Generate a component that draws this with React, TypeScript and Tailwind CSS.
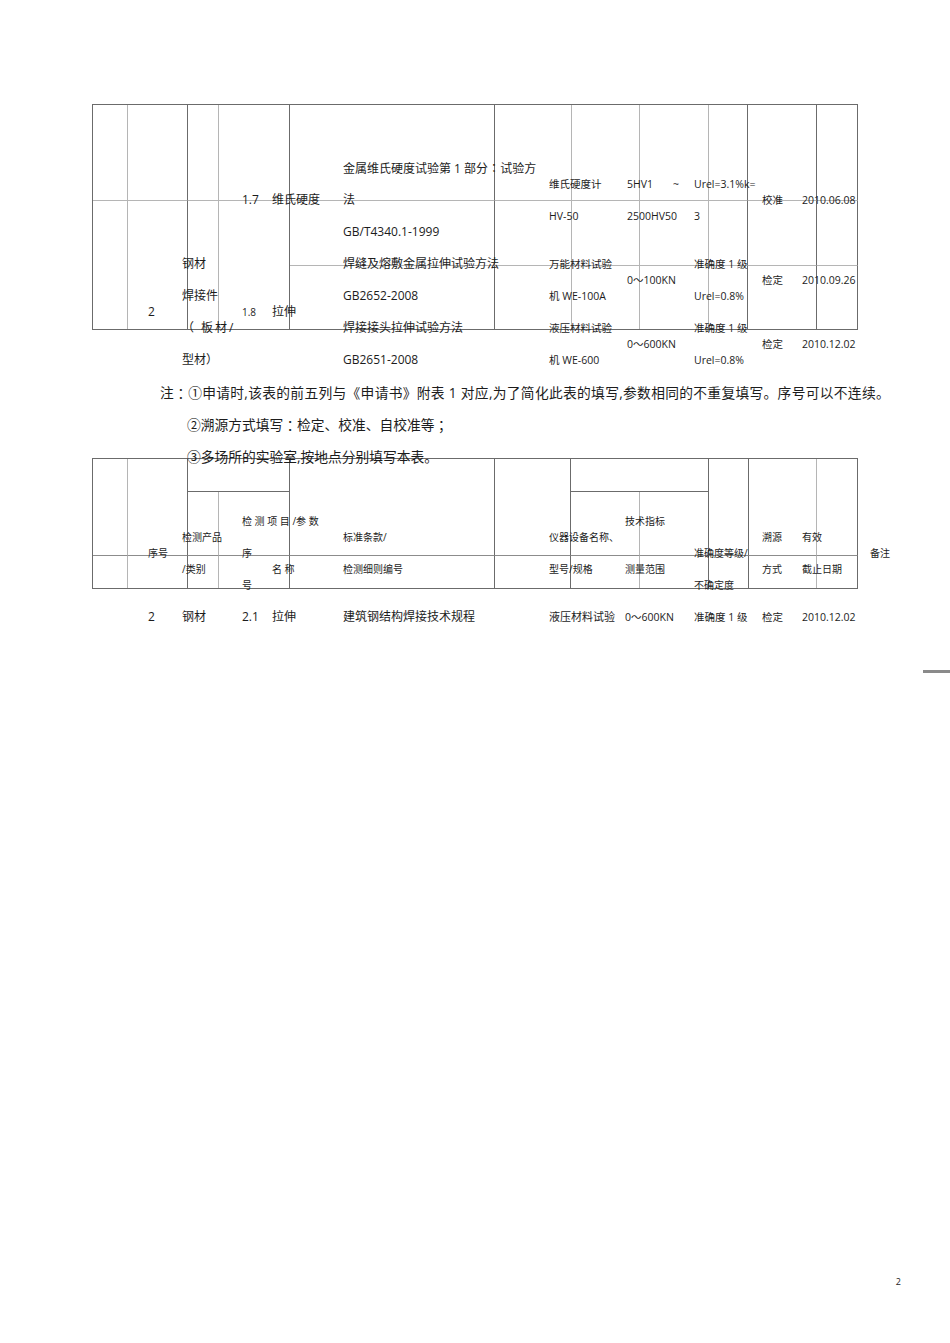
import type { ReactNode } from "react";
import clsx from "clsx";

// column starts (x): 148 182 242 272 343 549 627 694 762 802 870
const COL = [
	"col-start-2",
	"col-start-3",
	"col-start-4",
	"col-start-5",
	"col-start-6",
	"col-start-7",
	"col-start-8",
	"col-start-9",
	"col-start-10",
	"col-start-11",
	"col-start-12",
];

const S = "text-[10.5px]";
const H = "text-[10px]";

type Cell = [number, ReactNode, string?];

// centred full-width punctuation
function P({ c }: { c: string }) {
	return <span className="font-['Noto_Sans_CJK_JP',sans-serif]">{c}</span>;
}

function Line({ cells = [] }: { cells?: Cell[] }) {
	return (
		<div className="grid h-4 grid-cols-[148px_34px_60px_30px_71px_206px_78px_67px_68px_40px_68px_1fr] items-center">
			{cells.map(([col, text, cls], i) => (
				<span
					key={i}
					className={clsx(
						"row-start-1 whitespace-nowrap leading-4",
						COL[col],
						cls ?? "text-[12px]",
					)}
				>
					{text}
				</span>
			))}
		</div>
	);
}

// border colours
const RD = "border-r border-r-[#6b6b6b]";
const RL = "border-r border-r-[#b5b5b5]";
const BL = "border-b border-b-[#b5b5b5]";
const BD = "border-b border-b-[#6b6b6b]";
const BM = "border-b border-b-[#8c8c8c]";

function TableOne({ className }: { className?: string }) {
	const right = [RL, RD, RL, RD, RD, RL, RL, RL, RD, RD, RD];
	return (
		<div
			className={clsx(
				"grid w-max grid-cols-[35px_60px_31px_71px_205px_77px_68px_69px_39px_69px_41px] grid-rows-[96px_65px_63px] border-t border-b border-l border-[#6b6b6b]",
				className,
			)}
		>
			{right.map((r, i) => (
				<div key={`a${i}`} className={clsx(r, BL)} />
			))}
			{right.slice(0, 4).map((r, i) => (
				<div key={`b${i}`} className={clsx("row-span-2", r)} />
			))}
			{right.slice(4).map((r, i) => (
				<div key={`c${i}`} className={clsx(r, BL)} />
			))}
			{right.slice(4).map((r, i) => (
				<div key={`d${i}`} className={r} />
			))}
		</div>
	);
}

function TableTwo({ className }: { className?: string }) {
	return (
		<div
			className={clsx(
				"grid w-max grid-cols-[35px_60px_31px_71px_205px_76px_69px_69px_40px_68px_41px] grid-rows-[33px_64px_32px] border-t border-b border-l border-[#6b6b6b]",
				className,
			)}
		>
			{/* top band */}
			<div className={clsx("row-span-2", RL, BM)} />
			<div className={clsx("row-span-2", RD, BM)} />
			<div className={clsx("col-span-2", RD, BD)} />
			<div className={clsx("row-span-2", RD, BM)} />
			<div className={clsx("row-span-2", RD, BM)} />
			<div className={clsx("col-span-2", RD, BD)} />
			<div className={clsx("row-span-2", RD, BM)} />
			<div className={clsx("row-span-2", RL, BM)} />
			<div className={clsx("row-span-2", RD, BM)} />
			{/* split sub-columns */}
			<div className={clsx(RL, BM)} />
			<div className={clsx(RD, BM)} />
			<div className={clsx(RL, BM)} />
			<div className={clsx(RD, BM)} />
			{/* lower row */}
			{[RL, RD, RL, RD, RD, RD, RL, RD, RD, RL, RD].map((r, i) => (
				<div key={i} className={r} />
			))}
		</div>
	);
}

export default function App() {
	return (
		<div className="min-h-[1343px] w-[950px] bg-white font-['Open_Sans','Noto_Sans_CJK_SC',sans-serif] text-[#1c1c1c]">
			<div className="grid">
				<TableOne className="col-start-1 row-start-1 ml-[92px] mt-[104px] self-start" />
				<TableTwo className="col-start-1 row-start-1 ml-[92px] mt-[458px] self-start" />

				<div className="col-start-1 row-start-1 flex flex-col pt-[160px]">
					{/* table one text */}
					<Line
						cells={[
							[
								4,
								<>
									金属维氏硬度试验第 1 部分
									<P c="：" />
									试验方
								</>,
							],
						]}
					/>
					<Line
						cells={[
							[5, "维氏硬度计", S],
							[
								6,
								<span className="flex w-[52px] justify-between">
									5HV1<span>~</span>
								</span>,
								S,
							],
							[7, "Urel=3.1%k=", S],
						]}
					/>
					<Line
						cells={[
							[2, "1.7"],
							[3, "维氏硬度"],
							[4, "法"],
							[8, "校准", S],
							[9, "2010.06.08", S],
						]}
					/>
					<Line
						cells={[
							[5, "HV-50", S],
							[6, "2500HV50", S],
							[7, "3", S],
						]}
					/>
					<Line cells={[[4, "GB/T4340.1-1999"]]} />
					<Line />
					<Line
						cells={[
							[1, "钢材"],
							[4, "焊缝及熔敷金属拉伸试验方法"],
							[5, "万能材料试验", S],
							[7, "准确度 1 级", S],
						]}
					/>
					<Line
						cells={[
							[6, "0～100KN", S],
							[8, "检定", S],
							[9, "2010.09.26", S],
						]}
					/>
					<Line
						cells={[
							[1, "焊接件"],
							[4, "GB2652-2008"],
							[5, "机 WE-100A", S],
							[7, "Urel=0.8%", S],
						]}
					/>
					<Line
						cells={[
							[0, "2"],
							[2, "1.8", "text-[10px]"],
							[3, "拉伸"],
						]}
					/>
					<Line
						cells={[
							[1, "（ 板材/", "text-[12px] tracking-[2px]"],
							[4, "焊接接头拉伸试验方法"],
							[5, "液压材料试验", S],
							[7, "准确度 1 级", S],
						]}
					/>
					<Line
						cells={[
							[6, "0～600KN", S],
							[8, "检定", S],
							[9, "2010.12.02", S],
						]}
					/>
					<Line
						cells={[
							[1, "型材）"],
							[4, "GB2651-2008"],
							[5, "机 WE-600", S],
							[7, "Urel=0.8%", S],
						]}
					/>

					{/* notes */}
					<div className="mt-[9px] flex flex-col text-[13.75px]">
						<p className="flex h-8 items-center whitespace-nowrap pl-[160px] tracking-[0.3px]">
							注<P c="：" />
							①申请时,该表的前五列与《申请书》附表 1 对应,为了简化此表的填写,参数相同的不重复填写。序号可以不连续。
						</p>
						<p className="flex h-8 items-center whitespace-nowrap pl-[187px]">
							②溯源方式填写<P c="：" />
							检定、校准、自校准等<P c="；" />
						</p>
						<p className="flex h-8 items-center whitespace-nowrap pl-[187px]">
							③多场所的实验室,按地点分别填写本表。
						</p>
					</div>

					{/* table two text */}
					<div className="mt-[40px] flex flex-col">
						<Line
							cells={[
								[2, "检 测 项 目 /参 数", H],
								[6, "技术指标", clsx(H, "-ml-[2px]")],
							]}
						/>
						<Line
							cells={[
								[1, "检测产品", H],
								[4, "标准条款/", H],
								[5, "仪器设备名称、", H],
								[8, "溯源", H],
								[9, "有效", H],
							]}
						/>
						<Line
							cells={[
								[0, "序号", H],
								[2, "序", H],
								[7, "准确度等级/", H],
								[10, "备注", H],
							]}
						/>
						<Line
							cells={[
								[1, "/类别", H],
								[3, "名 称", H],
								[4, "检测细则编号", H],
								[5, "型号/规格", H],
								[6, "测量范围", clsx(H, "-ml-[2px]")],
								[8, "方式", H],
								[9, "截止日期", H],
							]}
						/>
						<Line
							cells={[
								[2, "号", H],
								[7, "不确定度", H],
							]}
						/>
						<Line />
						<Line
							cells={[
								[0, "2"],
								[1, "钢材"],
								[2, "2.1"],
								[3, "拉伸"],
								[4, "建筑钢结构焊接技术规程"],
								[5, "液压材料试验", "text-[11px]"],
								[6, "0～600KN", clsx(S, "-ml-[2px]")],
								[7, "准确度 1 级", S],
								[8, "检定", S],
								[9, "2010.12.02", S],
							]}
						/>
					</div>

					<div className="mt-[45px] h-[3px] w-[27px] self-end bg-[#8a8a8a]" />

					<p className="mt-[603px] pr-[49px] text-right text-[9px] leading-3">2</p>
				</div>
			</div>
		</div>
	);
}
